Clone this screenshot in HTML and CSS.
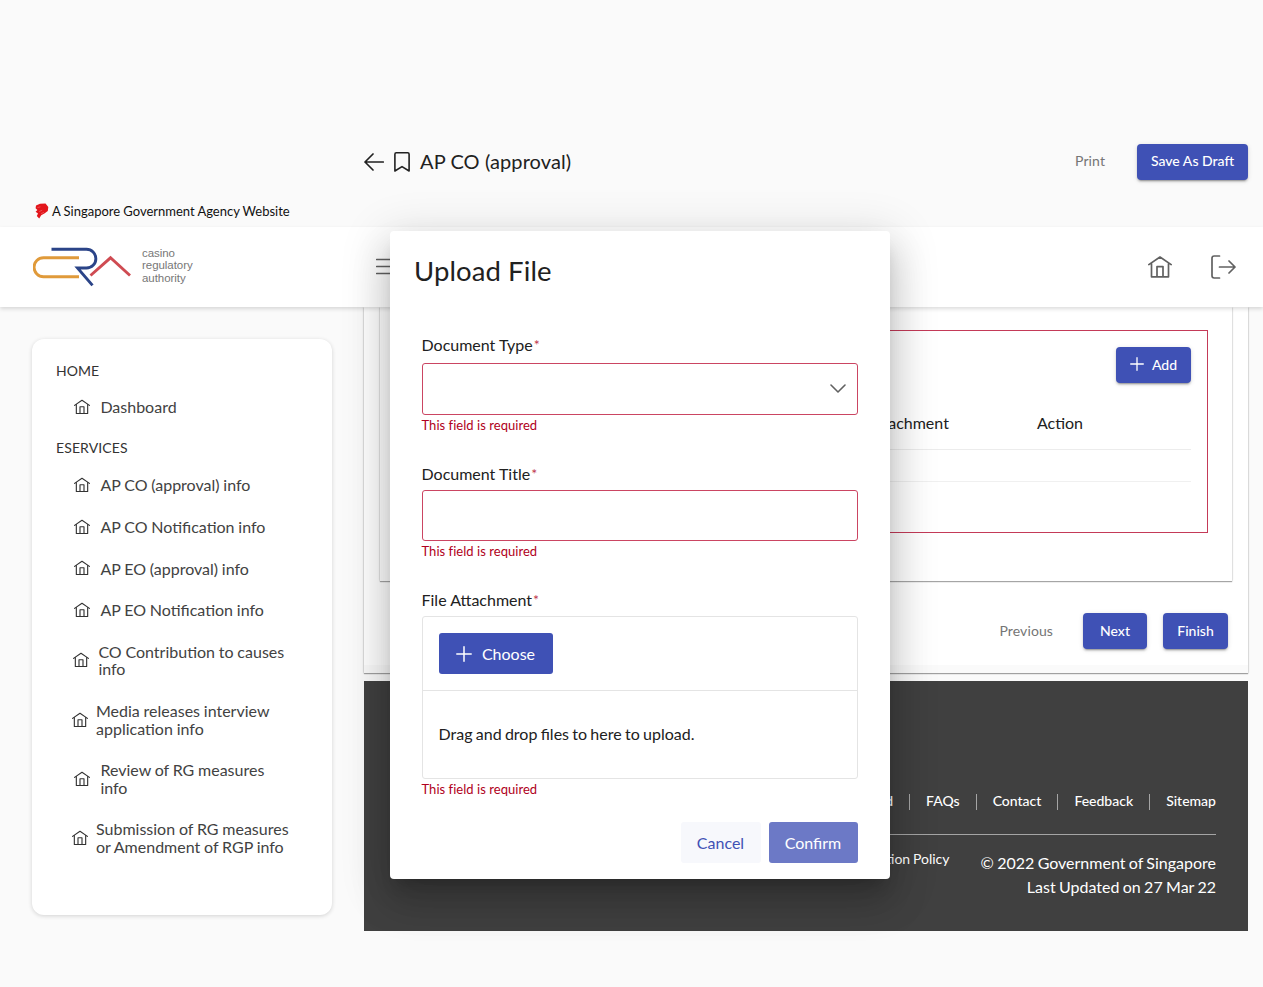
FILE: index.html
```html
<!DOCTYPE html>
<html lang="en">
<head>
<meta charset="utf-8">
<title>AP CO (approval)</title>
<link rel="stylesheet" href="styles.css">
</head>
<body>
<svg class="defs" width="0" height="0">
  <symbol id="home" viewBox="0 0 24 24"><path d="M.8 9.600 12 2l11.200 7.600M3.500 8.400v13.400h17V8.400M9 21.800V11.600h6v10.200" fill="none" stroke="currentColor" stroke-width="1.700" stroke-linejoin="round" stroke-linecap="round"/></symbol>
  <symbol id="plus" viewBox="0 0 16 16"><path d="M8 .8v14.400M.8 8h14.400" fill="none" stroke="currentColor" stroke-width="1.500" stroke-linecap="round"/></symbol>
</svg>
<div class="page">
  <div class="toolbar">
    <svg class="back" viewBox="0 0 20 18"><path d="M19.300 9H1M9 1 1 9l8 8" fill="none" stroke="currentColor" stroke-width="1.700" stroke-linecap="round" stroke-linejoin="round"/></svg>
    <svg class="mark" viewBox="0 0 16 20"><path d="M.9 19V2.200Q.9.8 2.300.8h11.400q1.400 0 1.400 1.400V19L8 14.600z" fill="none" stroke="currentColor" stroke-width="1.600" stroke-linejoin="round"/></svg>
    <h1>AP CO (approval)</h1>
    <span class="flat print">Print</span>
    <button class="btn save">Save As Draft</button>
  </div>
  <div class="gov">
    <svg class="lion" viewBox="0 0 14 16"><path d="M1 2.600 5 .8l5.500-.2L13.300 4l-.5 4-3.400 2.600-3.200 1.600-2 3.300L1.800 13 3 10.600.6 8.800 2.400 7 .6 5.200z" fill="#e3151b"/><path d="m4.200 8.600 3-1.400M6 10.600l3-1.200M2.400 4.600l3-.8" stroke="#fff" stroke-width=".6" opacity=".4"/></svg>
    <span>A Singapore Government Agency Website</span>
  </div>
  <header class="header">
    <svg class="logo" viewBox="0 0 98 40" fill="none" stroke-width="2.900">
      <path d="M46 10.800H10.500a9.400 9.400 0 0 0 0 18.900H46" stroke="#e09a3a"/>
      <path d="M18.500 2.300H53.500a9.300 9.300 0 0 1 0 18.700H44.500L59.500 38.400" stroke="#2b4488"/>
      <path d="m57.500 28.500 20-17.700 19.500 17.700" stroke="#cf4b52"/>
    </svg>
    <div class="logo-text">casino<br>regulatory<br>authority</div>
    <svg class="menu" viewBox="0 0 22 17"><path d="M.7 1.500h20.600M.7 8.500h20.600M.7 15.500h20.600" stroke="currentColor" stroke-width="1.700" stroke-linecap="round"/></svg>
    <svg class="h-home"><use href="#home"/></svg>
    <svg class="logout" viewBox="0 0 25 24" fill="none" stroke="currentColor" stroke-width="1.700" stroke-linecap="round" stroke-linejoin="round"><path d="M8.500 1H3.200Q1 1 1 3.200v17.600Q1 23 3.200 23h5.300M8.500 12H24M18 6l6 6-6 6"/></svg>
  </header>
  <div class="body">
    <nav class="side">
      <div class="cap">HOME</div>
      <a class="item"><svg><use href="#home"/></svg><span>Dashboard</span></a>
      <div class="cap second">ESERVICES</div>
      <a class="item"><svg><use href="#home"/></svg><span>AP CO (approval) info</span></a>
      <a class="item"><svg><use href="#home"/></svg><span>AP CO Notification info</span></a>
      <a class="item"><svg><use href="#home"/></svg><span>AP EO (approval) info</span></a>
      <a class="item"><svg><use href="#home"/></svg><span>AP EO Notification info</span></a>
      <a class="item snug"><svg><use href="#home"/></svg><span>CO Contribution to causes<br>info</span></a>
      <a class="item tight"><svg><use href="#home"/></svg><span>Media releases interview<br>application info</span></a>
      <a class="item"><svg><use href="#home"/></svg><span>Review of RG measures<br>info</span></a>
      <a class="item tight"><svg><use href="#home"/></svg><span>Submission of RG measures<br>or Amendment of RGP info</span></a>
    </nav>
    <main class="main">
      <section class="card">
        <div class="inner">
          <div class="invalid">
            <button class="btn add"><svg><use href="#plus"/></svg>Add</button>
            <div class="thead"><span>File Attachment</span><span>Action</span></div>
            <div class="trow"></div>
          </div>
        </div>
        <div class="steps">
          <span class="flat">Previous</span>
          <button class="btn next">Next</button>
          <button class="btn finish">Finish</button>
        </div>
      </section>
      <footer class="footer">
        <div class="links"><a>Download</a><a>FAQs</a><a>Contact</a><a>Feedback</a><a>Sitemap</a></div>
        <div class="legal">
          <span class="policy">Data Protection Policy</span>
          <p>© 2022 Government of Singapore<br>Last Updated on 27 Mar 22</p>
        </div>
      </footer>
    </main>
  </div>
</div>
<div class="modal" role="dialog">
  <h2>Upload File</h2>
  <div class="form">
    <label>Document Type<i>*</i></label>
    <div class="field select"><svg viewBox="0 0 16 9"><path d="m1 1 7 7 7-7" fill="none" stroke="currentColor" stroke-width="1.600" stroke-linecap="round" stroke-linejoin="round"/></svg></div>
    <p class="err">This field is required</p>
    <label class="l2">Document Title<i>*</i></label>
    <div class="field title"></div>
    <p class="err">This field is required</p>
    <label class="l3">File Attachment<i>*</i></label>
    <div class="upload">
      <div class="bar"><button class="choose"><svg><use href="#plus"/></svg>Choose</button></div>
      <div class="drop">Drag and drop files to here to upload.</div>
    </div>
    <p class="err">This field is required</p>
    <div class="actions"><button class="cancel">Cancel</button><button class="confirm">Confirm</button></div>
  </div>
</div>
</body>
</html>
```
FILE: styles.css
```css
* { box-sizing: border-box; }
body { margin: 0; background: #fafafa; color: #212121; font: 16px/24px Lato, sans-serif; overflow: hidden; }
h1, h2, p { margin: 0; font-weight: 400; }
button { font: inherit; border: 0; padding: 0; color: #fff; display: flex; align-items: center; justify-content: center; }
svg { flex: none; display: block; }
.defs { position: absolute; }
.page { height: 987px; display: flex; flex-direction: column; }

.toolbar { height: 195px; flex: none; padding: 129px 15px 0 364px; display: flex; align-items: center; }
.back { width: 20px; height: 18px; margin-top: -1px; }
.mark { width: 16px; height: 20px; margin: -1px 0 0 10px; }
.toolbar h1 { font-size: 20px; margin-left: 10px; padding-bottom: 2px; letter-spacing: .1px; }
.flat { color: #757575; font-size: 14px; letter-spacing: .1px; }
.print { margin-left: auto; margin-right: 32px; padding-bottom: 2px; }
.btn { height: 36px; border-radius: 4px; background: #3f51b5; font-size: 14px; font-weight: 500; box-shadow: 0 3px 1px -2px rgba(0,0,0,.2), 0 2px 2px rgba(0,0,0,.14), 0 1px 5px rgba(0,0,0,.12); }
.save { width: 111px; padding-bottom: 2px; }

.gov { height: 32px; flex: none; padding-left: 35px; display: flex; align-items: center; gap: 3px; font-size: 13px; color: #111; word-spacing: -.15px; }
.lion { width: 14px; height: 16px; }

.header { height: 80px; flex: none; background: #fff; box-shadow: 0 2px 4px rgba(0,0,0,.14); display: flex; align-items: center; padding: 0 26px 0 33px; color: #616161; position: relative; }
.logo { width: 98px; height: 40px; }
.logo-text { font: 11.500px/12.500px "Liberation Sans", sans-serif; letter-spacing: -.05px; margin: -3px 0 0 11px; color: #777; width: 60px; }
.menu { width: 22px; height: 17px; margin: -2px 0 0 174px; }
.h-home { width: 24px; height: 24px; margin-left: auto; }
.logout { width: 25px; height: 24px; margin-left: 39px; margin-right: 1px; }

.body { display: flex; gap: 32px; padding-left: 32px; }
.side { width: 300px; height: 576px; margin-top: 32px; background: #fff; border-radius: 12px; box-shadow: 0 1px 4px rgba(0,0,0,.16); padding: 20px 24px; color: #424242; }
.cap { font-size: 14px; line-height: 24px; height: 27.200px; color: #333; }
.second { height: 36.600px; padding-top: 8px; letter-spacing: .1px; }
.item { display: flex; align-items: center; padding: 12px 0 12px 18.400px; gap: 10px; line-height: 17.600px; white-space: nowrap; word-spacing: -.3px; }
.item svg { width: 16px; height: 16px; color: #333; }
.snug { padding-left: 17.400px; gap: 9px; }
.tight { padding-left: 16px; gap: 8px; }

.main { width: 884px; }
.card { height: 366px; background: linear-gradient(#fff 358px, #fafafa 358px); padding: 0 16px 24px; box-shadow: 0 1px 1px rgba(0,0,0,.3), 0 0 2px rgba(0,0,0,.25); display: flex; flex-direction: column; }
.inner { height: 274px; padding: 22.500px 24px 0; box-shadow: 0 1px 1px rgba(0,0,0,.3), 0 0 2px rgba(0,0,0,.22); }
.invalid { height: 203px; border: 1px solid #c43a58; padding: 16px 16px; }
.add { width: 75px; margin-left: auto; gap: 8px; }
.add svg { width: 14px; height: 14px; margin-top: -2px; }
.thead { height: 67px; display: flex; align-items: center; border-bottom: 1px solid #ececec; padding: 14px 108px 0 0; justify-content: flex-end; gap: 88px; }
.trow { height: 32px; border-bottom: 1px solid #f0f0f0; }
.steps { display: flex; align-items: center; justify-content: flex-end; padding: 32px 4px 0 0; }
.next { width: 64px; margin: 0 16px 0 30px; }
.finish { width: 65px; }
.footer { height: 250px; margin-top: 8px; background: #404040; color: #fff; padding: 108px 32px 0; }
.links { display: flex; justify-content: flex-end; height: 46px; border-bottom: 1px solid #a5a5a5; font-size: 14px; font-weight: 500; }
.links a { display: flex; }
.links a::before { content: ""; width: 1px; height: 16px; margin: 5px 16px 0; background: #a5a5a5; }
.legal { display: flex; justify-content: flex-end; gap: 31px; padding-top: 16px; text-align: right; word-spacing: -.75px; }
.policy { font-size: 14px; line-height: 16px; }

.modal { position: absolute; left: 390px; top: 231px; width: 500px; height: 648px; background: #fff; border-radius: 4px; padding: 24px 32.500px 24px 31.500px; box-shadow: 0 11px 15px -7px rgba(0,0,0,.2), 0 24px 38px 3px rgba(0,0,0,.14), 0 9px 46px 8px rgba(0,0,0,.12); }
.modal h2 { font-size: 27.500px; line-height: 32px; margin-left: -7.500px; letter-spacing: .1px; }
.form { padding-top: 45px; display: flex; flex-direction: column; }
label { height: 30.500px; line-height: 25px; }
label i { font-style: normal; color: #b00020; font-size: 14px; margin-left: 1px; position: relative; top: -1px; opacity: .8; }
.field { height: 52px; border: 1px solid #cb4562; border-radius: 3px; color: #616161; }
.title { height: 51px; }
.select { display: flex; align-items: center; justify-content: flex-end; padding-right: 11px; }
.select svg { width: 16px; height: 9px; margin-top: -1px; }
.err { color: #b00020; font-size: 13px; line-height: 20px; letter-spacing: .04px; font-variant-ligatures: common-ligatures; }
.l2 { margin-top: 26px; height: 29.500px; }
.l3 { margin-top: 26px; height: 29px; }
.upload { height: 163px; border: 1px solid #e4e4e4; border-radius: 3px; }
.bar { height: 74px; padding: 16px; border-bottom: 1px solid #e4e4e4; }
.choose { width: 114px; height: 41px; border-radius: 3px; background: #3f51b5; gap: 10px; }
.choose svg { width: 16px; height: 16px; margin-top: 1px; }
.drop { padding: 31px 16px; word-spacing: -.8px; }
.actions { display: flex; justify-content: flex-end; gap: 8px; padding-top: 23px; }
.cancel { width: 80px; height: 41px; background: #f7f8fc; color: #3f51b5; border-radius: 3px; }
.confirm { width: 89px; height: 41px; background: #6c79c6; border-radius: 3px; }
```
